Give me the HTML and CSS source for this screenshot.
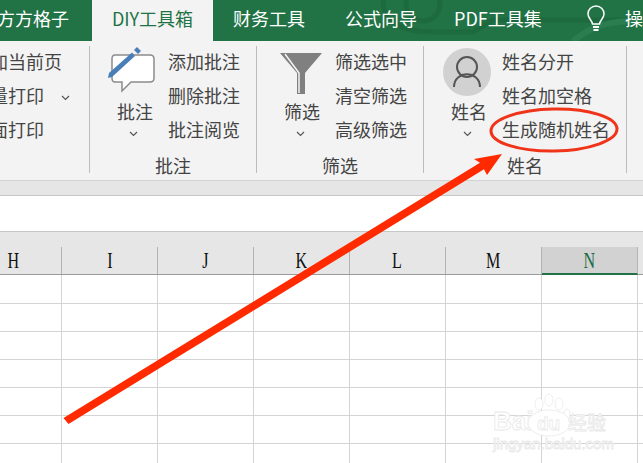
FILE: index.html
```html
<!DOCTYPE html>
<html lang="zh">
<head>
  <meta charset="UTF-8" />
  <title>DIY工具箱</title>
  <link rel="stylesheet" href="styles.css">
</head>
<body>
  <div class="tabs">
    <div class="tab tab-first">方方格子</div>
    <div class="tab tab-active">DIY工具箱</div>
    <div class="tab">财务工具</div>
    <div class="tab">公式向导</div>
    <div class="tab tab-pdf">PDF工具集</div>
    <svg class="bulb" width="20" height="28" viewBox="0 0 20 28">
      <path d="M6.500 19 C6 15 2 13.500 2 9 A8 8 0 0 1 18 9 C18 13.500 14 15 13.500 19 Z" fill="none" stroke="#fff" stroke-width="1.500"/>
      <path d="M7 22 H13 M7.500 25 H12.500" stroke="#fff" stroke-width="1.800"/>
    </svg>
    <div class="tab tab-last">操</div>
    <svg class="circuit" width="300" height="41" viewBox="0 0 300 41">
      <path d="M40 0 C40 22 60 32 90 32 H130 L150 20 H300" fill="none" stroke="#1d6a3e" stroke-width="5"/>
      <circle cx="80" cy="4" r="17" fill="none" stroke="#1d6a3e" stroke-width="5"/>
      <path d="M230 41 C250 25 262 22 300 20" fill="none" stroke="#2b7c4e" stroke-width="6"/>
    </svg>
  </div>

  <div class="ribbon">
    <div class="group group-cut">
      <div class="list list-cut">
        <div class="item">添加当前页</div>
        <div class="item">批量打印<svg class="chevron chevron-inline" width="9" height="6" viewBox="0 0 9 6"><path d="M1 1 L4.500 4.500 L8 1" fill="none" stroke="#555" stroke-width="1.200"/></svg></div>
        <div class="item">双面打印</div>
      </div>
    </div>

    <div class="group">
      <div class="group-body">
        <div class="large">
          <svg class="large-icon" width="60" height="54" viewBox="0 0 60 54">
            <path d="M10 9 H45 Q49 9 49 13 V32 Q49 36 45 36 H26 L17 45 V36 H10 Q7 36 7 32 V13 Q7 9 10 9 Z" fill="#fff" stroke="#8c8c8c" stroke-width="1.500"/>
            <path d="M4 27 L27 6.500 L30 10 L7 31 L3 32 Z" fill="#4a7eb9"/>
            <path d="M29 4 L32 1 L36 5 L33 8 Z" fill="#4a7eb9"/>
          </svg>
          <div class="large-label">批注</div>
          <svg class="chevron" width="9" height="6" viewBox="0 0 9 6"><path d="M1 1 L4.500 4.500 L8 1" fill="none" stroke="#555" stroke-width="1.200"/></svg>
        </div>
        <div class="list">
          <div class="item">添加批注</div>
          <div class="item">删除批注</div>
          <div class="item">批注阅览</div>
        </div>
      </div>
      <div class="group-label">批注</div>
    </div>

    <div class="group">
      <div class="group-body">
        <div class="large">
          <svg class="large-icon" width="60" height="54" viewBox="0 0 60 54">
            <path d="M8 7 H50 L33 27 V48 H25 V27 Z" fill="#808080"/>
            <path d="M13 8 L27 27 V47" fill="none" stroke="#f3f3f3" stroke-width="1.500"/>
          </svg>
          <div class="large-label">筛选</div>
          <svg class="chevron" width="9" height="6" viewBox="0 0 9 6"><path d="M1 1 L4.500 4.500 L8 1" fill="none" stroke="#555" stroke-width="1.200"/></svg>
        </div>
        <div class="list">
          <div class="item">筛选选中</div>
          <div class="item">清空筛选</div>
          <div class="item">高级筛选</div>
        </div>
      </div>
      <div class="group-label">筛选</div>
    </div>

    <div class="group group-wide">
      <div class="group-body">
        <div class="large">
          <svg class="large-icon" width="60" height="54" viewBox="0 0 60 54">
            <circle cx="28" cy="26" r="24" fill="#d1d1d1"/>
            <circle cx="28" cy="21" r="10" fill="none" stroke="#555" stroke-width="2"/>
            <path d="M15 41 C15 24 41 24 41 41" fill="none" stroke="#555" stroke-width="2"/>
          </svg>
          <div class="large-label">姓名</div>
          <svg class="chevron" width="9" height="6" viewBox="0 0 9 6"><path d="M1 1 L4.500 4.500 L8 1" fill="none" stroke="#555" stroke-width="1.200"/></svg>
        </div>
        <div class="list">
          <div class="item">姓名分开</div>
          <div class="item">姓名加空格</div>
          <div class="item">生成随机姓名</div>
        </div>
      </div>
      <div class="group-label">姓名</div>
    </div>
  </div>

  <div class="strip"></div>
  <div class="formula"></div>

  <div class="col-head">
    <div class="col"><span class="col-name">H</span></div>
    <div class="col"><span class="col-name">I</span></div>
    <div class="col"><span class="col-name">J</span></div>
    <div class="col"><span class="col-name">K</span></div>
    <div class="col"><span class="col-name">L</span></div>
    <div class="col"><span class="col-name">M</span></div>
    <div class="col col-active"><span class="col-name">N</span></div>
  </div>

  <table class="sheet">
    <tr><td></td><td></td><td></td><td></td><td></td><td></td><td></td><td></td></tr>
    <tr><td></td><td></td><td></td><td></td><td></td><td></td><td></td><td></td></tr>
    <tr><td></td><td></td><td></td><td></td><td></td><td></td><td></td><td></td></tr>
    <tr><td></td><td></td><td></td><td></td><td></td><td></td><td></td><td></td></tr>
    <tr><td></td><td></td><td></td><td></td><td></td><td></td><td></td><td></td></tr>
    <tr><td></td><td></td><td></td><td></td><td></td><td></td><td></td><td></td></tr>
    <tr><td></td><td></td><td></td><td></td><td></td><td></td><td></td><td></td></tr>
  </table>

  <!-- marks drawn over the screenshot -->
  <svg class="overlay" width="643" height="463" viewBox="0 0 643 463">
    <g fill="#fff" stroke="#e9e9e9" stroke-width="0.800">
      <ellipse cx="549" cy="400" rx="4" ry="6"/>
      <ellipse cx="539" cy="404" rx="4" ry="6"/>
      <ellipse cx="559" cy="404" rx="4" ry="6"/>
      <ellipse cx="567" cy="414" rx="3" ry="5"/>
      <text x="493" y="430" class="mark-big">Bai</text>
      <ellipse cx="549" cy="423" rx="21" ry="13"/>
      <text x="537" y="430" class="mark-du">du</text>
      <text x="568" y="430" class="mark-cn">经验</text>
      <text x="493" y="449" class="mark-url">jingyan.baidu.com</text>
    </g>
    <ellipse class="ring" cx="554" cy="130" rx="63" ry="21" transform="rotate(-1 554 130)"/>
    <path class="arrow" d="M68.500 424 L63.500 418 L480 162.700 L474 159 L502 154 L487 175 L484 169.300 Z"/>
  </svg>
</body>
</html>
```

FILE: styles.css
```css
* { box-sizing: border-box; }
html, body { margin: 0; padding: 0; }
body { position: relative; width: 643px; height: 463px; overflow: hidden; background: #fff; font-family: "Noto Sans CJK SC", "Noto Sans", sans-serif; color: #444; }

.tabs { position: relative; display: flex; height: 41px; background: #217346; overflow: hidden; }
.tab { position: relative; z-index: 1; flex: none; padding: 0 20px; font-size: 18px; line-height: 36px; color: #fff; white-space: nowrap; }
.tab-first { width: 92px; padding: 0; text-indent: -3px; }
.tab-active { width: 121px; padding: 0; text-align: center; background: #f3f3f3; color: #217346; }
.tab-pdf { margin-left: -3px; }
.tab-last { position: absolute; left: 605px; }
.bulb { position: absolute; z-index: 1; left: 586px; top: 5px; }
.circuit { position: absolute; left: 343px; top: 0; }

.ribbon { display: flex; height: 140px; padding-top: 5px; background: #f3f3f3; border-bottom: 1px solid #d2d2d2; overflow: hidden; }
.group { flex: none; width: 167px; height: 127px; border-right: 1px solid #bdbdbd; }
.group-cut { width: 90px; }
.group-wide { width: 203px; }
.group-body { display: flex; height: 107px; padding-left: 15px; }
.group-label { font-size: 18px; line-height: 24px; text-align: center; }

.large { flex: none; width: 60px; display: flex; flex-direction: column; align-items: center; }
.large-icon { display: block; flex: none; margin-bottom: -1px; }
.large-label { font-size: 18px; line-height: 24px; }
.chevron { display: block; margin: 8px 4px 0 0; }
.chevron-inline { display: inline-block; margin: 0 0 2px 17px; }

.list { margin-left: 3px; margin-top: -2px; }
.list-cut { margin-left: -28px; }
.item { font-size: 18px; line-height: 34px; height: 34px; white-space: nowrap; }

.strip { height: 15px; background: #e6e6e6; border-bottom: 1px solid #c6c6c6; }
.formula { height: 36px; background: #fff; border-bottom: 1px solid #c6c6c6; }

.col-head { display: flex; align-items: flex-end; height: 43px; width: 678px; margin-left: -34px; background: #e6e6e6; border-bottom: 1px solid #9b9b9b; }
.col { flex: none; width: 96px; height: 27px; text-align: center; font-family: "Liberation Serif", serif; font-size: 23px; line-height: 28px; color: #111; border-right: 1px solid #b4b4b4; }
.col-name { display: inline-block; transform: scaleX(0.7); }
.col-active { height: 28px; margin-bottom: -1px; background: #d2d2d2; color: #1c6b45; border-bottom: 2px solid #217346; }

.sheet { border-collapse: collapse; table-layout: fixed; width: 768px; margin-left: -35px; }
.sheet td { width: 96px; height: 28px; padding: 0; border-right: 1px solid #d4d4d4; border-bottom: 1px solid #d4d4d4; }

.overlay { position: absolute; left: 0; top: 0; }
.ring { fill: none; stroke: #f0341a; stroke-width: 3; }
.arrow { fill: #ff2a00; }
.mark-big { font-family: "Liberation Sans", sans-serif; font-size: 26px; font-weight: 700; }
.mark-du { font-family: "Liberation Sans", sans-serif; font-size: 19px; font-weight: 700; }
.mark-cn { font-size: 19px; }
.mark-url { font-family: "Liberation Sans", sans-serif; font-size: 15px; }
```
